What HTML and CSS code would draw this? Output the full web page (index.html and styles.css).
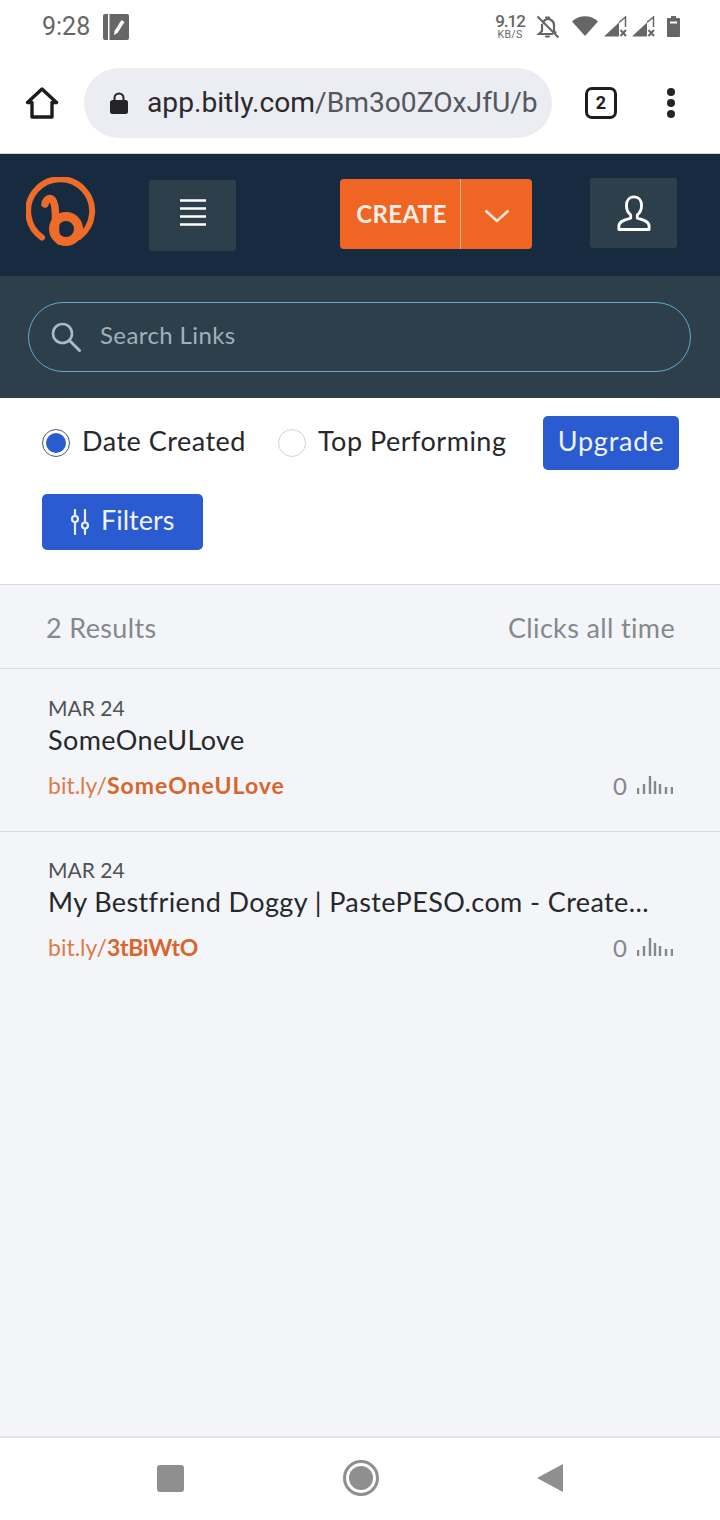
FILE: index.html
```html
<!DOCTYPE html>
<html lang="en">
<head>
    <meta charset="UTF-8">
    <meta name="viewport" content="width=device-width, initial-scale=1.0">
    <title>Bitly Links</title>
    <link rel="stylesheet" href="styles.css">
</head>
<body>

    <div class="status-bar">
        <div class="status-left">
            <span class="clock">9:28</span>
            <svg class="note-icon" width="26" height="26" viewBox="0 0 26 26">
                <path d="M2 0h3v26H2a2 2 0 0 1-2-2V2a2 2 0 0 1 2-2z" fill="#666"/>
                <path d="M6.500 0H24a2 2 0 0 1 2 2v22a2 2 0 0 1-2 2H6.500z" fill="#666"/>
                <path d="M18.500 6l3 2-7 11-3.500 2 .5-4z" fill="#fff"/>
            </svg>
        </div>
        <div class="status-right">
            <div class="speed"><span class="speed-num">9.12</span><span class="speed-unit">KB/S</span></div>
            <svg class="bell" width="24" height="24" viewBox="0 0 24 24" fill="none" stroke="#666" stroke-width="2.200">
                <path d="M7 8.500a5 5 0 0 1 8-3.500 5.500 5.500 0 0 1 3 5v6l2 2.500M6 9v7l-3 3h14"/>
                <path d="M10 2.500h3M10 21.500h3" stroke-linecap="round"/>
                <path d="M1.500 1.500l21 21"/>
            </svg>
            <svg class="wifi" width="26" height="20" viewBox="0 0 26 20"><path d="M0 5.500C7-1.500 19-1.500 26 5.500L13 20z" fill="#666"/></svg>
            <div class="signals">
                <svg width="23" height="21" viewBox="0 0 23 21">
                    <path d="M0 20.500L15 6.500v14z" fill="#666"/>
                    <path d="M15 6.500L21.500 1v10" fill="none" stroke="#666" stroke-width="1.500"/>
                    <path d="M16.500 14l5.500 6M22 14l-5.500 6" stroke="#666" stroke-width="2"/>
                </svg>
                <svg width="23" height="21" viewBox="0 0 23 21">
                    <path d="M0 20.500L15 6.500v14z" fill="#666"/>
                    <path d="M15 6.500L21.500 1v10" fill="none" stroke="#666" stroke-width="1.500"/>
                    <path d="M16.500 14l5.500 6M22 14l-5.500 6" stroke="#666" stroke-width="2"/>
                </svg>
            </div>
            <svg class="battery" width="13" height="21" viewBox="0 0 13 21">
                <path d="M4 0h5v2h3a1 1 0 0 1 1 1v17a1 1 0 0 1-1 1H1a1 1 0 0 1-1-1V3a1 1 0 0 1 1-1h3z" fill="#666"/>
                <path d="M3 5.500h7v2H3z" fill="#fff"/>
            </svg>
        </div>
    </div>

    <div class="toolbar">
        <svg class="home-icon" width="34" height="32" viewBox="0 0 34 32" fill="none" stroke="#1d1d20" stroke-width="3.400" stroke-linejoin="round">
            <path d="M2.500 15.500L17 2l14.500 13.500H27V30H7V15.500z"/>
        </svg>
        <div class="url-pill">
            <svg class="lock" width="18" height="22" viewBox="0 0 18 22">
                <path d="M4.500 9V6a4.500 4.500 0 0 1 9 0v3" fill="none" stroke="#232328" stroke-width="2"/>
                <rect x="0" y="8" width="18" height="14" rx="2.500" fill="#232328"/>
            </svg>
            <span class="url"><span class="url-host">app.bitly.com</span>/Bm3o0ZOxJfU/b</span>
        </div>
        <div class="tabs-count">2</div>
        <div class="dots"><i></i><i></i><i></i></div>
    </div>

    <div class="site-header">
        <svg class="logo" width="72" height="72" viewBox="0 0 72 72" fill="none" stroke="#ee6b2a" stroke-linecap="round">
            <path d="M16 60.500A32 32 0 1 1 53 60" stroke-width="6"/>
            <path d="M19 27c1-5 5-7 7.500-4 2.500 3 3 9 3 17v13c0 6 1.500 9 4 11" stroke-width="7.500"/>
            <circle cx="40" cy="52" r="12.500" stroke-width="9"/>
        </svg>
        <button class="dark-btn menu-btn">
            <svg width="28" height="27" viewBox="0 0 28 27" stroke="#fff" stroke-width="2.400">
                <path d="M1 1.500h26M1 9.500h26M1 17.500h26M1 25.500h26"/>
            </svg>
        </button>
        <div class="create-btn">
            <span class="create-label">CREATE</span>
            <span class="create-arrow">
                <svg width="26" height="14" viewBox="0 0 26 14" fill="none" stroke="#fbe6d8" stroke-width="2.600"><path d="M1.500 1.500L13 12 24.500 1.500"/></svg>
            </span>
        </div>
        <button class="dark-btn user-btn">
            <svg width="34" height="36" viewBox="0 0 36 38" fill="none" stroke="#fff" stroke-width="3" stroke-linejoin="round">
                <path d="M18 2c-5 0-8 4-8 9 0 4 2 8 4.500 10v3.500C10 26 2 27 2 33v3.500h32V33c0-6-8-7-12.500-8.500V21c2.500-2 4.500-6 4.500-10 0-5-3-9-8-9z"/>
            </svg>
        </button>
    </div>

    <div class="search-band">
        <div class="search-box">
            <svg width="30" height="30" viewBox="0 0 30 30" fill="none" stroke="#a9bac6" stroke-width="2.600" stroke-linecap="round">
                <circle cx="11.500" cy="11.500" r="9.500"/>
                <path d="M18.500 18.500L28.500 28.500" stroke-width="3"/>
            </svg>
            <span class="search-text">Search Links</span>
        </div>
    </div>

    <div class="controls">
        <div class="sort-row">
            <span class="radio radio-on"></span>
            <span class="radio-label">Date Created</span>
            <span class="radio radio-second"></span>
            <span class="radio-label">Top Performing</span>
            <button class="blue-btn upgrade-btn">Upgrade</button>
        </div>
        <button class="blue-btn filters-btn">
            <svg width="20" height="26" viewBox="0 0 20 26" fill="none" stroke="#e8f0fb" stroke-width="2.200" stroke-linecap="round">
                <path d="M5 1v6M5 13v12M15 1v12M15 20v5"/>
                <circle cx="5" cy="10" r="3"/>
                <circle cx="15" cy="16.500" r="3"/>
            </svg>
            <span>Filters</span>
        </button>
    </div>

    <div class="results">
        <div class="results-head">
            <span>2 Results</span>
            <span>Clicks all time</span>
        </div>

        <div class="link-item">
            <div class="link-date">MAR 24</div>
            <div class="link-title">SomeOneULove</div>
            <div class="link-foot">
                <span class="link-url">bit.ly/<b>SomeOneULove</b></span>
                <span class="link-clicks">0
                    <svg width="36" height="18" viewBox="0 0 36 18" stroke="#85878c" stroke-width="2.400">
                        <path d="M1 18v-6M7 18V8M13 18V0M18 18V5M23 18V8M29 18v-7M35 18v-7"/>
                    </svg>
                </span>
            </div>
        </div>

        <div class="link-item">
            <div class="link-date">MAR 24</div>
            <div class="link-title">My Bestfriend Doggy | PastePESO.com - Create...</div>
            <div class="link-foot">
                <span class="link-url link-url-short">bit.ly/<b>3tBiWtO</b></span>
                <span class="link-clicks">0
                    <svg width="36" height="18" viewBox="0 0 36 18" stroke="#85878c" stroke-width="2.400">
                        <path d="M1 18v-6M7 18V8M13 18V0M18 18V5M23 18V8M29 18v-7M35 18v-7"/>
                    </svg>
                </span>
            </div>
        </div>
    </div>

    <div class="nav-bar">
        <span class="nav-square"></span>
        <span class="nav-circle"><i></i></span>
        <svg width="26" height="28" viewBox="0 0 26 28"><path d="M26 0v28L0 14z" fill="#8f8f8f"/></svg>
    </div>

</body>
</html>
```
FILE: styles.css
```css
* {
    box-sizing: border-box;
}
body {
    margin: 0;
    height: 1520px;
    display: flex;
    flex-direction: column;
    background: #f4f5f9;
    font-family: Lato, Arial, sans-serif;
    overflow: hidden;
}
button {
    border: none;
    padding: 0;
    font-family: inherit;
}
svg {
    display: block;
    flex: none;
}

/* phone status bar */
.status-bar {
    height: 54px;
    background: #fff;
    padding: 13px 40px 0 42px;
    display: flex;
    justify-content: space-between;
    font-family: Roboto, Arial, sans-serif;
    color: #666;
}
.status-left {
    display: flex;
    align-items: flex-start;
    gap: 13px;
}
.clock {
    font-size: 25px;
    line-height: 28px;
}
.note-icon {
    margin-top: 1px;
}
.status-right {
    display: flex;
    align-items: flex-start;
}
.speed {
    width: 30px;
    display: flex;
    flex-direction: column;
    align-items: center;
    margin-right: 11px;
}
.speed-num {
    font-size: 17px;
    line-height: 17px;
    font-weight: 500;
    letter-spacing: -1px;
}
.speed-unit {
    font-size: 10.500px;
    line-height: 9px;
    letter-spacing: .3px;
}
.bell {
    margin: 2px 12px 0 0;
}
.wifi {
    margin: 3px 6px 0 0;
}
.signals {
    display: flex;
    gap: 5px;
    margin: 3px 12px 0 0;
}
.battery {
    margin-top: 3px;
}

/* browser toolbar */
.toolbar {
    height: 100px;
    background: #fff;
    border-bottom: 1px solid #d4d4d6;
    display: flex;
    align-items: center;
    padding: 0 0 1px 25px;
}
.home-icon {
    margin-right: 25px;
}
.url-pill {
    width: 468px;
    height: 70px;
    border-radius: 35px;
    background: #ecedf3;
    display: flex;
    align-items: center;
    padding-left: 26px;
    gap: 19px;
    margin-top: -1px;
}
.url {
    font-family: Roboto, Arial, sans-serif;
    font-size: 28.200px;
    color: #55575c;
    white-space: nowrap;
}
.url-host {
    color: #2a2a2e;
}
.tabs-count {
    width: 32px;
    height: 32px;
    margin-left: 33px;
    border: 3px solid #1d1d20;
    border-radius: 7px;
    font: 700 18px/26px Roboto, Arial, sans-serif;
    text-align: center;
    color: #1d1d20;
}
.dots {
    margin-left: 50px;
    display: flex;
    flex-direction: column;
    gap: 3px;
}
.dots i {
    width: 8px;
    height: 8px;
    border-radius: 50%;
    background: #232328;
}

/* bitly header */
.site-header {
    height: 122px;
    background: #172b40;
    display: flex;
    align-items: center;
    padding: 0 0 2px 26px;
}
.logo {
    margin-top: -2px;
}
.dark-btn {
    width: 87px;
    height: 71px;
    background: #2d3f4b;
    border-radius: 3px;
    display: flex;
    align-items: center;
    justify-content: center;
}
.menu-btn {
    margin-left: 51px;
    margin-top: 2px;
}
.menu-btn svg {
    margin-bottom: 6px;
}
.create-btn {
    width: 192px;
    height: 70px;
    margin-left: 104px;
    background: #f06524;
    border-radius: 4px;
    display: flex;
    color: #fbeee6;
}
.create-label {
    width: 121px;
    padding-left: 3px;
    border-right: 1px solid #f7b48c;
    text-align: center;
    font-size: 24px;
    font-weight: 700;
    line-height: 70px;
    letter-spacing: .4px;
}
.create-arrow {
    flex: 1;
    display: flex;
    align-items: center;
    justify-content: center;
    padding-top: 4px;
}
.user-btn {
    height: 70px;
    margin-left: 58px;
    margin-top: -2px;
}

.search-band {
    height: 122px;
    background: #2d3f4b;
    padding: 26px 29px 0 28px;
}
.search-box {
    height: 70px;
    border: 1px solid #62a9cc;
    border-radius: 35px;
    display: flex;
    align-items: center;
    padding-left: 22px;
    gap: 19px;
    color: #a0b1bd;
    font-size: 24px;
}
.search-text {
    letter-spacing: .4px;
    padding-bottom: 6px;
}

/* sort + filter */
.controls {
    height: 187px;
    background: #fff;
    border-bottom: 1px solid #d9d9dc;
    padding: 18px 41px 0 42px;
}
.sort-row {
    display: flex;
    align-items: center;
    font-size: 27px;
    color: #26282c;
}
.radio {
    width: 28px;
    height: 28px;
    border-radius: 50%;
    border: 1px solid #d4d4d4;
    background: #fff;
    flex: none;
}
.radio-on {
    border-color: #4a5a70;
    position: relative;
}
.radio-on::after {
    content: "";
    position: absolute;
    inset: 3px;
    border-radius: 50%;
    background: #2a5bd0;
}
.radio-label {
    margin-left: 12px;
    padding-bottom: 6px;
    white-space: nowrap;
    letter-spacing: .5px;
}
.radio-second {
    margin-left: 32px;
}
.blue-btn {
    background: #2a5bd0;
    color: #eef3fc;
    border-radius: 5px;
    font-size: 27px;
    display: flex;
    align-items: center;
}
.upgrade-btn {
    width: 136px;
    height: 54px;
    margin-left: auto;
    justify-content: center;
    letter-spacing: .8px;
    padding-bottom: 6px;
}
.filters-btn {
    width: 161px;
    height: 56px;
    margin-top: 24px;
    padding-left: 28px;
    gap: 11px;
}
.filters-btn span {
    padding-bottom: 6px;
}

/* results list */
.results {
    flex: 1;
}
.results-head {
    height: 84px;
    border-bottom: 1px solid #dcdde0;
    padding: 2px 45px 0 46px;
    display: flex;
    align-items: center;
    justify-content: space-between;
    color: #85888d;
    font-size: 27px;
    letter-spacing: .35px;
}
.link-item {
    height: 163px;
    border-bottom: 1px solid #dcdde0;
    padding: 27px 47px 0 48px;
}
.link-item + .link-item {
    padding-top: 26px;
}
.link-item:last-child {
    border-bottom: none;
}
.link-date {
    font-size: 21px;
    line-height: 24px;
    color: #4f5257;
}
.link-title {
    font-size: 27px;
    line-height: 34px;
    margin-top: 3px;
    color: #26282c;
    white-space: nowrap;
    letter-spacing: .4px;
}
.link-foot {
    display: flex;
    justify-content: space-between;
    align-items: center;
    margin-top: 12px;
}
.link-url {
    font-size: 23px;
    line-height: 32px;
    color: #de7b48;
}
.link-url b {
    color: #d9652c;
    letter-spacing: 1px;
}
.link-url-short b {
    letter-spacing: -.3px;
}
.link-clicks {
    display: flex;
    align-items: center;
    gap: 10px;
    font-size: 24px;
    color: #85878c;
}

/* phone nav */
.nav-bar {
    height: 84px;
    background: #fff;
    border-top: 2px solid #e4e4e8;
    display: flex;
    align-items: center;
    padding: 0 157px 2px;
    justify-content: space-between;
}
.nav-square {
    width: 27px;
    height: 27px;
    border-radius: 3px;
    background: #8f8f8f;
}
.nav-circle {
    width: 36px;
    height: 36px;
    border-radius: 50%;
    border: 3px solid #8f8f8f;
    display: flex;
    align-items: center;
    justify-content: center;
}
.nav-circle i {
    width: 24px;
    height: 24px;
    border-radius: 50%;
    background: #8f8f8f;
}
```
